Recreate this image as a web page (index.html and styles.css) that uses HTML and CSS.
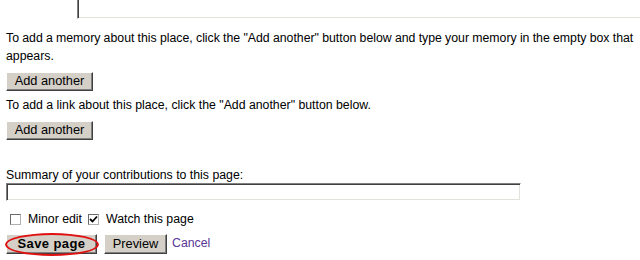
FILE: index.html
```html
<!DOCTYPE html>
<html>
<head>
<meta charset="utf-8">
<link rel="stylesheet" href="styles.css">
</head>
<body>
<div class="page">
  <div class="textarea-tail"></div>
  <p class="para first">To add a memory about this place, click the "Add another" button below and type your memory in the empty box that appears.</p>
  <div class="btn-row"><span class="btn add">Add another</span></div>
  <p class="para second">To add a link about this place, click the "Add another" button below.</p>
  <div class="btn-row"><span class="btn add">Add another</span></div>
  <div class="summary-label">Summary of your contributions to this page:</div>
  <div class="summary-input"></div>
  <div class="checks">
    <span class="checkbox"></span><span class="check-label minor">Minor edit</span>
    <span class="checkbox checked"><svg width="9" height="9" viewBox="0 0 9 9"><polyline points="1,4 3.5,6.5 8,1.5" fill="none" stroke="#000" stroke-width="1.8"/></svg></span><span class="check-label">Watch this page</span>
  </div>
  <div class="actions">
    <span class="btn save">Save page<span class="ring"></span></span>
    <span class="btn preview">Preview</span>
    <a class="cancel" href="#">Cancel</a>
  </div>
</div>
</body>
</html>
```

FILE: styles.css
```css
html, body {
  margin: 0;
  padding: 0;
  background: #fff;
  overflow: hidden;
}
.page {
  width: 640px;
  height: 260px;
  overflow: hidden;
  padding-left: 6px;
  box-sizing: border-box;
  font-family: "Liberation Sans", Arial, sans-serif;
  font-size: 12.3px;
  color: #000;
}
.textarea-tail {
  margin-left: 71px;
  width: 700px;
  height: 18px;
  border-left: 1px solid #808080;
  border-bottom: 1px solid #fff;
  box-shadow: inset 1px 0 0 #404040, inset 0 -1px 0 #e4e2dc;
}
.para {
  margin: 0;
  line-height: 18px;
}
.para.first {
  margin-top: 10px;
  word-spacing: -0.2px;
}
.para.second {
  margin-top: 5px;
}
.btn-row {
  margin-top: 7px;
  height: 19px;
}
.btn {
  display: inline-block;
  position: relative;
  box-sizing: border-box;
  height: 19px;
  line-height: 16px;
  text-align: center;
  background: #d4d0c8;
  border-top: 1px solid #fff;
  border-left: 1px solid #fff;
  border-right: 1px solid #404040;
  border-bottom: 1px solid #404040;
  box-shadow: inset -1px -1px 0 #808080;
  color: #000;
  white-space: nowrap;
  vertical-align: top;
  flex-shrink: 0;
}
.btn.add {
  width: 87px;
  font-size: 12.8px;
}
.summary-label {
  margin-top: 27px;
  line-height: 16px;
}
.summary-input {
  width: 515px;
  height: 18px;
  box-sizing: border-box;
  border-top: 1px solid #808080;
  border-left: 1px solid #808080;
  border-right: 1px solid #fff;
  border-bottom: 1px solid #fff;
  box-shadow: inset 1px 1px 0 #404040, inset -1px -1px 0 #e4e2dc;
  background: #fff;
}
.checks {
  margin-top: 10px;
  height: 16px;
  display: flex;
  align-items: center;
  padding-left: 4px;
}
.checkbox {
  flex-shrink: 0;
  width: 11px;
  height: 11px;
  box-sizing: border-box;
  border: 1px solid #6a6a6a;
  border-right-color: #b0b0b0;
  border-bottom-color: #b0b0b0;
  background: #fff;
  display: inline-flex;
  align-items: center;
  justify-content: center;
}
.check-label {
  flex-shrink: 0;
  white-space: nowrap;
  margin-left: 7px;
  margin-right: 8px;
}
.check-label.minor {
  width: 52px;
  margin-right: 8px;
}
.actions {
  margin-top: 7px;
  display: flex;
  align-items: flex-start;
  height: 20px;
}
.btn.save {
  width: 91px;
  font-weight: bold;
  font-size: 13px;
  height: 20px;
  line-height: 17px;
  letter-spacing: 0.4px;
}
.btn.preview {
  width: 63px;
  margin-left: 7px;
  height: 20px;
  line-height: 17px;
  font-size: 12.8px;
}
.ring {
  position: absolute;
  left: -2px;
  top: -2px;
  width: 94px;
  height: 23px;
  border: 2px solid #e01010;
  border-radius: 50%;
  box-sizing: border-box;
}
.cancel {
  margin-left: 5px;
  line-height: 19px;
  color: #5a3696;
  text-decoration: none;
}
```
